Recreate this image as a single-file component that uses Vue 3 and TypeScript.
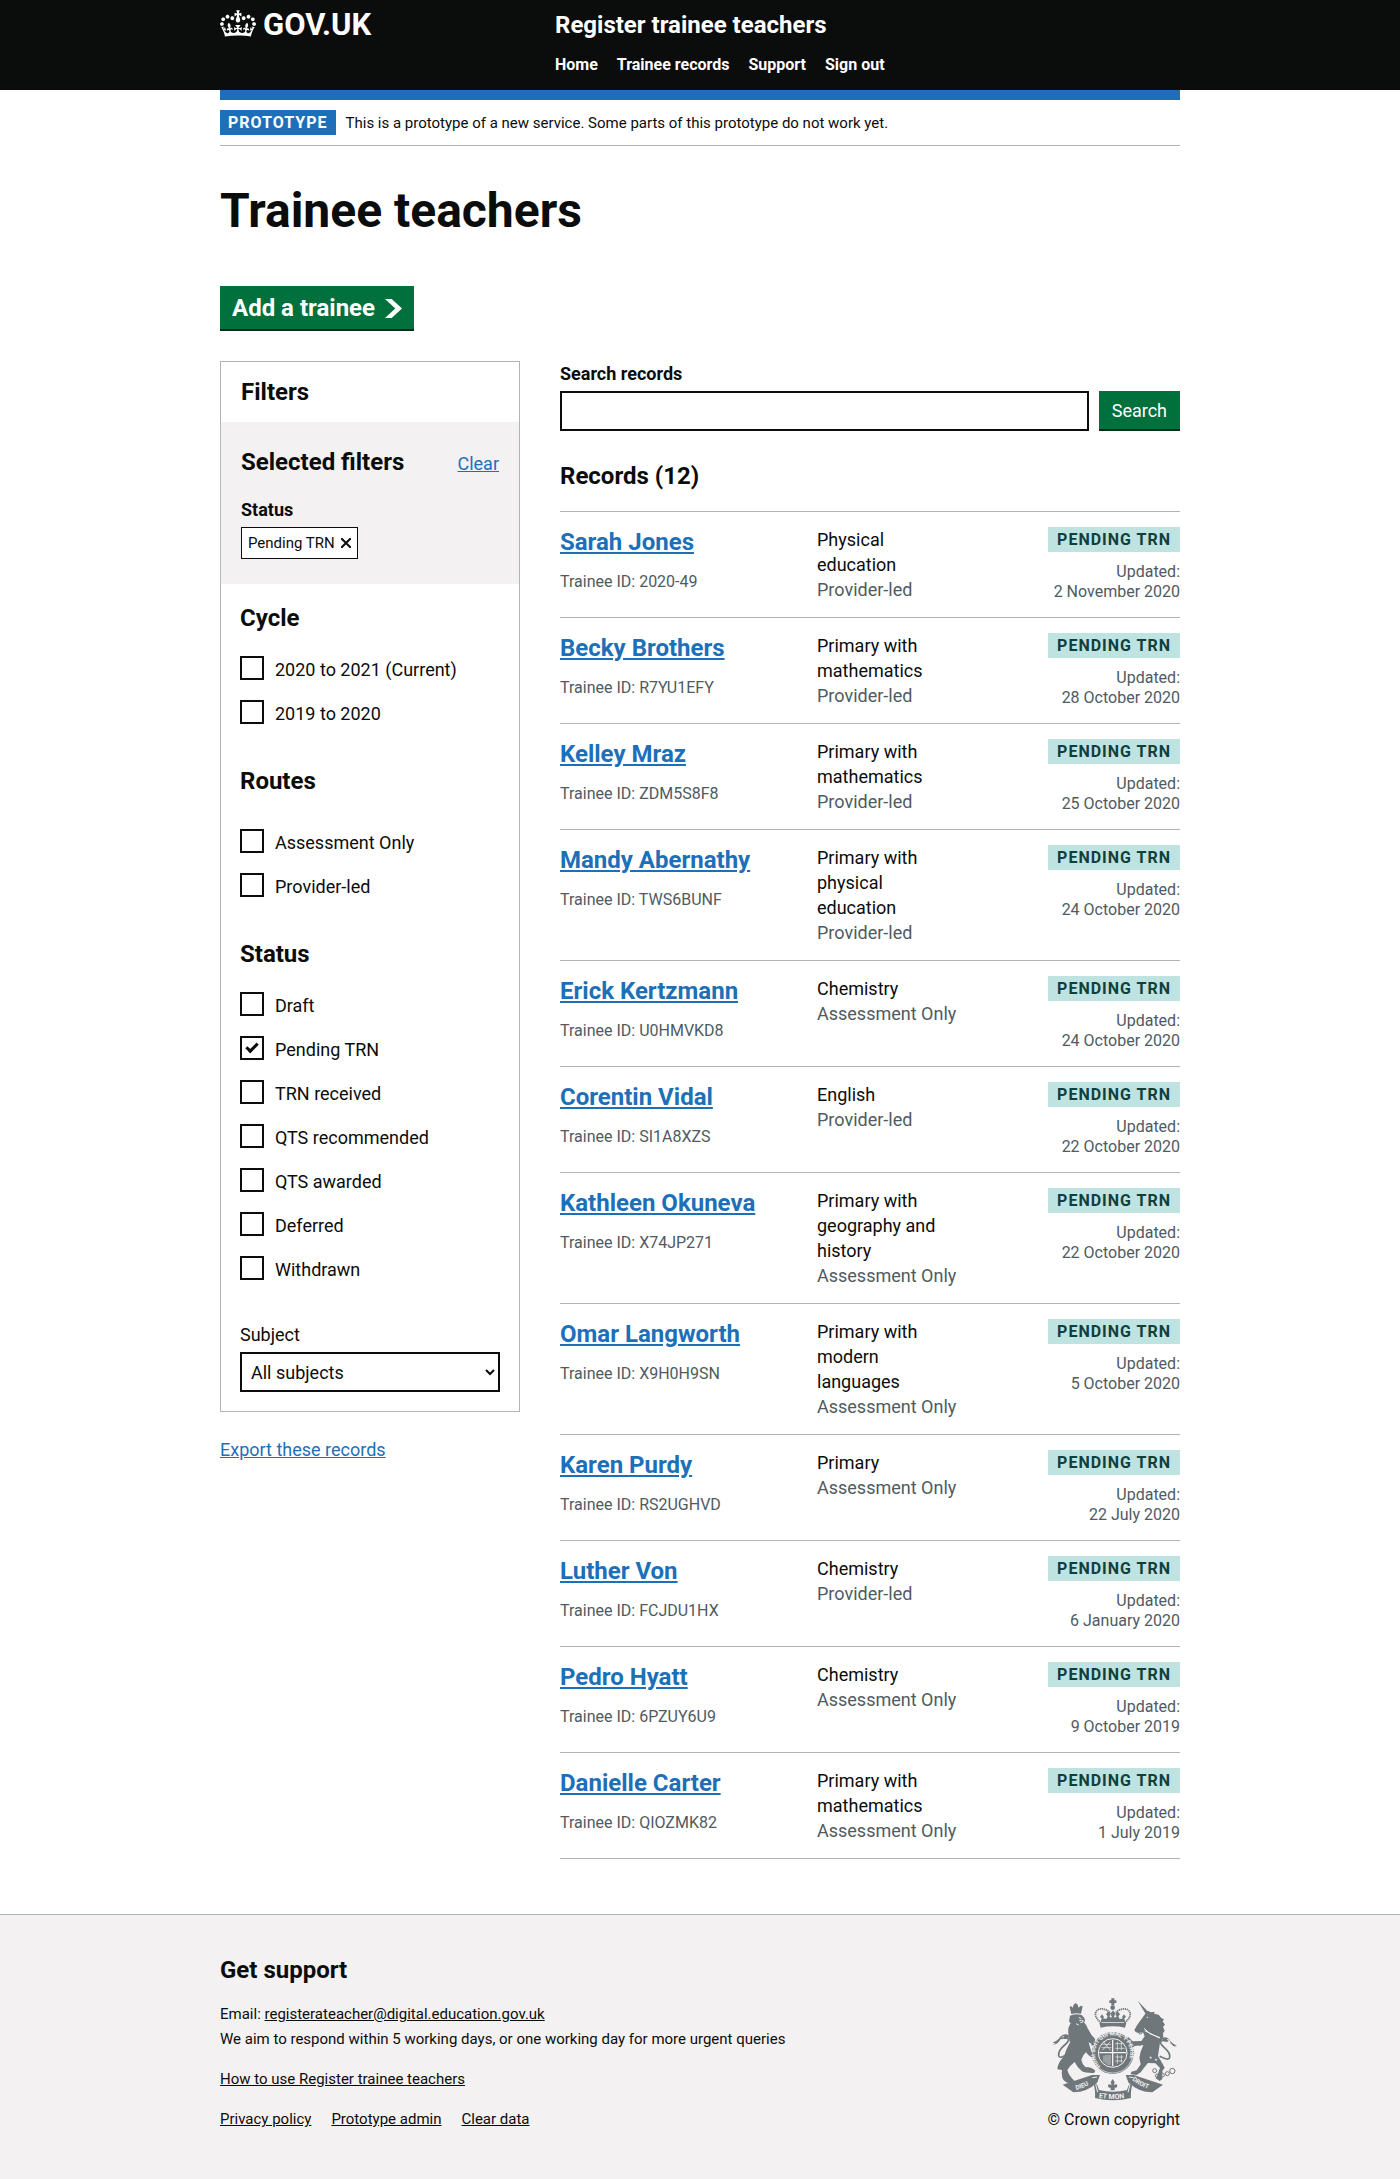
<script setup lang="ts">
import { ref } from 'vue'

interface Option {
  id: string
  label: string
}

interface FilterGroup {
  name: string
  spaced: boolean
  options: Option[]
}

interface TraineeRecord {
  name: string
  id: string
  subject: string
  route: string
  updated: string
}

const navigation: string[] = ['Home', 'Trainee records', 'Support', 'Sign out']
const footerLinks: string[] = ['Privacy policy', 'Prototype admin', 'Clear data']

const groups: FilterGroup[] = [
  {
    name: 'Cycle',
    spaced: false,
    options: [
      { id: 'cycle-2020', label: '2020 to 2021 (Current)' },
      { id: 'cycle-2019', label: '2019 to 2020' },
    ],
  },
  {
    name: 'Routes',
    spaced: true,
    options: [
      { id: 'route-assessment', label: 'Assessment Only' },
      { id: 'route-provider', label: 'Provider-led' },
    ],
  },
  {
    name: 'Status',
    spaced: false,
    options: [
      { id: 'status-draft', label: 'Draft' },
      { id: 'status-pending', label: 'Pending TRN' },
      { id: 'status-received', label: 'TRN received' },
      { id: 'status-recommended', label: 'QTS recommended' },
      { id: 'status-awarded', label: 'QTS awarded' },
      { id: 'status-deferred', label: 'Deferred' },
      { id: 'status-withdrawn', label: 'Withdrawn' },
    ],
  },
]

const selected = ref<string[]>(['status-pending'])
const subject = ref<string>('All subjects')
const query = ref<string>('')

const records: TraineeRecord[] = [
  { name: 'Sarah Jones', id: '2020-49', subject: 'Physical education', route: 'Provider-led', updated: '2 November 2020' },
  { name: 'Becky Brothers', id: 'R7YU1EFY', subject: 'Primary with mathematics', route: 'Provider-led', updated: '28 October 2020' },
  { name: 'Kelley Mraz', id: 'ZDM5S8F8', subject: 'Primary with mathematics', route: 'Provider-led', updated: '25 October 2020' },
  { name: 'Mandy Abernathy', id: 'TWS6BUNF', subject: 'Primary with physical education', route: 'Provider-led', updated: '24 October 2020' },
  { name: 'Erick Kertzmann', id: 'U0HMVKD8', subject: 'Chemistry', route: 'Assessment Only', updated: '24 October 2020' },
  { name: 'Corentin Vidal', id: 'SI1A8XZS', subject: 'English', route: 'Provider-led', updated: '22 October 2020' },
  { name: 'Kathleen Okuneva', id: 'X74JP271', subject: 'Primary with geography and history', route: 'Assessment Only', updated: '22 October 2020' },
  { name: 'Omar Langworth', id: 'X9H0H9SN', subject: 'Primary with modern languages', route: 'Assessment Only', updated: '5 October 2020' },
  { name: 'Karen Purdy', id: 'RS2UGHVD', subject: 'Primary', route: 'Assessment Only', updated: '22 July 2020' },
  { name: 'Luther Von', id: 'FCJDU1HX', subject: 'Chemistry', route: 'Provider-led', updated: '6 January 2020' },
  { name: 'Pedro Hyatt', id: '6PZUY6U9', subject: 'Chemistry', route: 'Assessment Only', updated: '9 October 2019' },
  { name: 'Danielle Carter', id: 'QIOZMK82', subject: 'Primary with mathematics', route: 'Assessment Only', updated: '1 July 2019' },
]
</script>

<template>
  <div class="page">
    <header class="header">
      <div class="container header-row">
        <a class="logo" href="#">
          <svg class="crown" viewBox="0 0 132 97" width="36" height="27" aria-hidden="true">
            <path
              fill="currentColor"
              fill-rule="evenodd"
              d="M25 30.2c3.5 1.5 7.7-.2 9.1-3.7 1.5-3.6-.2-7.8-3.9-9.2-3.6-1.4-7.6.3-9.1 3.9-1.4 3.5.3 7.5 3.9 9zM9 39.5c3.6 1.5 7.8-.2 9.2-3.7 1.5-3.6-.2-7.8-3.9-9.1-3.6-1.5-7.6.2-9.1 3.8-1.4 3.5.3 7.5 3.8 9zM4.4 57.2c3.5 1.5 7.7-.2 9.1-3.8 1.5-3.6-.2-7.7-3.9-9.1-3.5-1.5-7.6.3-9.1 3.8-1.4 3.5.3 7.6 3.9 9.1zm38.3-21.4c3.5 1.5 7.7-.2 9.1-3.8 1.5-3.6-.2-7.7-3.9-9.1-3.6-1.5-7.6.3-9.1 3.8-1.3 3.6.4 7.7 3.9 9.1zm64.4-5.6c-3.6 1.5-7.8-.2-9.1-3.7-1.5-3.6.2-7.8 3.8-9.2 3.6-1.4 7.7.3 9.2 3.9 1.3 3.5-.4 7.5-3.9 9zm15.9 9.3c-3.6 1.5-7.7-.2-9.1-3.7-1.5-3.6.2-7.8 3.7-9.1 3.6-1.5 7.7.2 9.2 3.8 1.5 3.5-.3 7.5-3.8 9zm4.7 17.7c-3.6 1.5-7.8-.2-9.2-3.8-1.5-3.6.2-7.7 3.9-9.1 3.6-1.5 7.7.3 9.2 3.8 1.3 3.5-.4 7.6-3.9 9.1zM89.3 35.8c-3.6 1.5-7.8-.2-9.2-3.8-1.4-3.6.2-7.7 3.9-9.1 3.6-1.5 7.7.3 9.2 3.8 1.4 3.6-.3 7.7-3.9 9.1zM69.7 17.7l8.9 4.7V9.3l-8.9 2.8c-.2-.3-.5-.6-.9-.9L72.4 0H59.6l3.5 11.2c-.3.3-.6.5-.9.9l-8.8-2.8v13.1l8.8-4.7c.3.3.6.7.9.9l-5 15.4v.1c-.2.8-.4 1.6-.4 2.4 0 4.1 3.1 7.5 7 8.1h.2c.3 0 .7.1 1 .1.4 0 .7 0 1-.1h.2c4-.6 7.1-4.1 7.1-8.1 0-.8-.1-1.7-.4-2.4V34l-5.1-15.4c.4-.2.7-.6 1-.9zM66 92.8c16.9 0 32.8 1.1 47.1 3.2 4-16.9 8.9-26.7 14-33.5l-9.6-3.4c1 4.9 1.1 7.2 0 10.2-1.5-1.4-3-4.3-4.2-8.7L108.6 76c2.8-2 5-3.2 7.5-3.3-4.4 9.4-10 11.9-13.6 11.2-4.3-.8-6.3-4.6-5.6-7.9 1-4.7 5.7-5.9 8-.5 4.3-8.7-3-11.4-7.6-8.8 7.1-7.2 7.9-13.5 2.1-21.1-8 6.1-8.1 12.3-4.5 20.8-4.7-5.4-12.1-2.5-9.5 6.2 3.4-5.2 7.9-2 7.2 3.1-.6 4.3-6.4 7.8-13.5 7.2-10.3-.9-10.9-8-11.2-13.8 2.5-.5 7.1 1.8 11 7.3L80.2 60c-4.1 4.4-8 5.3-12.3 5.4 1.4-4.4 8-11.6 8-11.6H55.5s6.4 7.2 7.9 11.6c-4.2-.1-8-1-12.3-5.4l1.4 16.4c3.9-5.5 8.5-7.7 10.9-7.3-.3 5.8-.9 12.8-11.1 13.8-7.2.6-12.9-2.9-13.5-7.2-.7-5 3.8-8.3 7.1-3.1 2.7-8.7-4.6-11.6-9.4-6.2 3.7-8.5 3.6-14.7-4.6-20.8-5.8 7.6-5 13.9 2.2 21.1-4.7-2.6-11.9.1-7.7 8.8 2.3-5.5 7.1-4.2 8.1.5.7 3.3-1.3 7.1-5.7 7.9-3.5.7-9-1.8-13.5-11.2 2.5.1 4.7 1.3 7.5 3.3l-4.7-15.4c-1.2 4.4-2.7 7.2-4.3 8.7-1.1-3-.9-5.3 0-10.2l-9.5 3.4c5 6.9 9.9 16.7 14 33.5 14.8-2.1 30.8-3.2 47.7-3.2z"
            />
          </svg>
          <span>GOV.UK</span>
        </a>
        <div class="service">
          <a class="service-name" href="#">Register trainee teachers</a>
          <nav class="nav" aria-label="Main">
            <a v-for="item in navigation" :key="item" href="#">{{ item }}</a>
          </nav>
        </div>
      </div>
    </header>

    <div class="container">
      <div class="phase">
        <strong class="tag tag-phase">Prototype</strong>
        <span>This is a prototype of a new service. Some parts of this prototype do not work yet.</span>
      </div>

      <main>
        <h1>Trainee teachers</h1>
        <button class="button start" type="button">
          Add a trainee
          <svg viewBox="0 0 33 40" width="17" height="19" preserveAspectRatio="none" aria-hidden="true">
            <path fill="currentColor" d="M0 0h13l20 20-20 20H0l20-20z" />
          </svg>
        </button>

        <div class="columns">
          <aside class="sidebar">
            <div class="filters">
              <h2 class="filters-title">Filters</h2>
              <div class="selected">
                <div class="selected-head">
                  <h2>Selected filters</h2>
                  <a class="link" href="#">Clear</a>
                </div>
                <h3>Status</h3>
                <a class="chip" href="#">
                  Pending TRN
                  <svg viewBox="0 0 10 10" width="10" height="10" aria-hidden="true">
                    <path d="M0 0l10 10M10 0L0 10" fill="none" stroke="currentColor" stroke-width="2" />
                  </svg>
                </a>
              </div>

              <form class="options" @submit.prevent>
                <fieldset v-for="group in groups" :key="group.name">
                  <legend :class="{ spaced: group.spaced }">{{ group.name }}</legend>
                  <div class="checks">
                    <label v-for="option in group.options" :key="option.id" class="check" :for="option.id">
                      <input :id="option.id" v-model="selected" type="checkbox" :value="option.id" />
                      <span>{{ option.label }}</span>
                    </label>
                  </div>
                </fieldset>
                <div class="field">
                  <label for="subject">Subject</label>
                  <select id="subject" v-model="subject">
                    <option>All subjects</option>
                  </select>
                </div>
              </form>
            </div>
            <a class="link export" href="#">Export these records</a>
          </aside>

          <section class="results">
            <form role="search" @submit.prevent>
              <label class="search-label" for="search">Search records</label>
              <div class="search-row">
                <input id="search" v-model="query" type="text" />
                <button class="button" type="submit">Search</button>
              </div>
            </form>

            <h2 class="count">Records (12)</h2>
            <ul class="records">
              <li v-for="record in records" :key="record.id" class="record">
                <div class="who">
                  <h3><a class="link" href="#">{{ record.name }}</a></h3>
                  <p>Trainee ID: {{ record.id }}</p>
                </div>
                <div class="what">
                  <p>{{ record.subject }}</p>
                  <p class="route">{{ record.route }}</p>
                </div>
                <div class="state">
                  <strong class="tag tag-status">Pending TRN</strong>
                  <p>Updated:<br />{{ record.updated }}</p>
                </div>
              </li>
            </ul>
          </section>
        </div>
      </main>
    </div>

    <footer class="footer">
      <div class="container footer-row">
        <div class="support">
          <h2>Get support</h2>
          <p>
            Email: <a href="#">registerateacher@digital.education.gov.uk</a><br />
            We aim to respond within 5 working days, or one working day for more urgent queries
          </p>
          <p><a href="#">How to use Register trainee teachers</a></p>
          <ul class="footer-links">
            <li v-for="item in footerLinks" :key="item"><a href="#">{{ item }}</a></li>
          </ul>
        </div>
        <a class="copyright" href="#">
          <svg class="crest" viewBox="60 50 390 315" width="130" height="105" aria-hidden="true">
            <defs>
              <path id="motto" d="M215 260A53 53 0 1 1 281 260" />
              <path id="ribbon-left" d="M139 329Q167 322 192 302" />
              <path id="ribbon-mid" d="M206 352Q248 360 292 352" />
              <path id="ribbon-right" d="M306 299Q333 322 370 330" />
            </defs>
            <g fill="#6f777b">
              <!-- crown above the shield -->
              <path d="M244 54h9v6h6v8h-6v7h-9v-7h-6v-8h6z" />
              <circle cx="248" cy="82" r="7" />
              <path d="M208 128h81l-4 14q-36-8-73 0z" />
              <path d="M212 126l3-12-5-4 6-8 6 8-3 4 10 2 4-8-5-6 7-9 7 9-4 6 6 6 3-8-5-6 7-10 7 10-5 6 3 8 6-6-4-6 7-9 7 9-5 6 4 8 10-2-3-4 6-8 6 8-5 4 3 12z" />
              <!-- lion -->
              <path d="M119 80l4-3 5 5 3-9 6-5 6 5 3 9 6-6 6 2-5 22q-15-3-29 1z" />
              <path d="M120 106q15-8 35-2l8 9q4 8-1 13 8 8 12 20l12 20q10 6 11 18l-5 16q-10-2-8-10l-8-4q4 22 14 36l-2 12q-14-8-20-18-10 8-14 22 2 14 12 22 22 0 30 12l-4 6q-24 1-36-5-16-14-22-28-16 12-22 24 4 16 22 34l-8 8q-22-4-28-16-4-14-2-26l-14-2q2-24 20-38 8-28 18-42-8-26-4-46l6-12-5-6z" />
              <path d="M66 194l10-4-8-4q16-4 22-16 12-14 28-4-4 12-18 10 6-5 0-9-8 3-9 11-8 14-25 16z" />
              <!-- unicorn -->
              <path d="M323 61l32 34-8 6z" />
              <path d="M346 100l8-9 8 5 12-2-2 6 14 3 8 10 8 4-4 6 7 10-6 6 5 12-5 8 1 12-10 16-3 20-3 20 12 20 8 15-7 10 0 24-8 6-12-8 5-9 8-22-14-14-22-1-10 12-12 16-12 8-18-2 2-8 16-4 12-18-4-20 4-18 8-20-26 3-10 8 10 14-6 8-18-16-2-20 8-14-10-8 10 2 12 12 26-1 10-14-5-12-14 2-8-3-4-6 8-14z" />
              <path d="M441 202l-8-5 8-2q-16-4-22-16-10-14-24-4 6 11 17 9-4-5 0-8 9 2 9 12 7 10 20 14z" />
              <!-- ribbons -->
              <path d="M98 313l88-29 24 0-8 22q-30 30-72 30z" />
              <path d="M399 313l-88-29-24 0 8 22q30 30 72 30z" />
              <path d="M187 303q10 20 8 50 54 14 108 0-2-30 8-50-14 2-20 26-42 10-84 0-6-24-20-26z" />
              <circle cx="248" cy="218" r="63" />
            </g>
            <g fill="none" stroke="#6f777b" stroke-width="5">
              <path d="M214 128c-40-30-4-60 28-30 3 3 4 8 4 14M283 128c40-30 4-60-28-30-3 3-4 8-4 14" stroke-dasharray="4 2" />
              <path d="M92 174c30-6 28 6 12 20s-20 24-18 32 14 6 26-6" />
              <path d="M415 182c-30-6-28 6-12 20s18 22 16 30-14 4-30-4" />
              <g stroke-width="3">
                <circle cx="374" cy="271" r="6" />
                <circle cx="381" cy="286" r="5" />
                <circle cx="397" cy="284" r="6" />
                <circle cx="412" cy="280" r="6" />
                <circle cx="427" cy="272" r="8" />
                <circle cx="331" cy="156" r="5" />
                <circle cx="329" cy="190" r="5" />
              </g>
            </g>
            <g fill="none" stroke="#f3f1f2" stroke-width="3">
              <circle cx="248" cy="218" r="60" stroke-width="2" />
              <circle cx="248" cy="218" r="43" />
              <path d="M208 217h80M248 178v80" stroke-width="4" />
              <path d="M217 192h26M214 202h30M220 184l22 26M241 184l-24 26M256 190h22M256 204h28M262 184v28M274 186v24M256 230h24M256 242h22M262 222v28M274 224v22" stroke-width="2" />
              <path d="M222 226v20M228 224v26M234 224v30M240 224v30" stroke-width="2" />
              <path d="M342 144l18 16 30 12M344 151l44 22" stroke-width="3" />
              <circle cx="352" cy="111" r="1" />
              <path d="M146 112l8 2M148 121q8-3 12 1-3 8-9 4M138 130l8 4" />
              <path d="M197 312l6 24M300 312l-6 24M187 292l14-2M311 292l-14-2" />
              <circle cx="362" cy="232" r="2" />
              <circle cx="378" cy="238" r="2" />
              <circle cx="392" cy="208" r="3" />
            </g>
            <path fill="#f3f1f2" d="M227 278a40 20 0 0 0 42 0l-6 10h-30z" />
            <path fill="#6f777b" d="M248 296l6 10-3 9q9-7 11 1 1 7-8 6v8h-12v-8q-9 1-8-6 2-8 11-1l-3-9z" />
            <g fill="#f3f1f2" font-weight="700">
              <text font-size="17"><textPath href="#motto" startOffset="4">HONI SOIT QUI MAL Y PENSE</textPath></text>
              <text font-size="19"><textPath href="#ribbon-left">DIEU</textPath></text>
              <text font-size="21"><textPath href="#ribbon-mid">ET MON</textPath></text>
              <text font-size="19"><textPath href="#ribbon-right">DROIT</textPath></text>
            </g>
          </svg>
          <span>© Crown copyright</span>
        </a>
      </div>
    </footer>
  </div>
</template>

<style>
body {
  margin: 0;
  background: #fff;
}
</style>

<style scoped>
.page {
  font-family: Roboto, "Liberation Sans", sans-serif;
  font-size: 18px;
  line-height: 25px;
  color: #0b0c0c;
}

.page *,
.page *::before {
  box-sizing: border-box;
}

h1,
h2,
h3,
p,
ul {
  margin: 0;
  padding: 0;
  list-style: none;
}

h2 {
  font-size: 24px;
  line-height: 30px;
}

h3 {
  font-size: 18px;
  line-height: 25px;
}

button,
input,
select {
  font: inherit;
  color: inherit;
  border-radius: 0;
}

.container {
  max-width: 960px;
  margin: 0 auto;
}

.link {
  color: #1d70b8;
}

.header {
  background: #0b0c0c;
  color: #fff;
}

.header-row {
  display: flex;
  padding: 10px 0 15px;
}

.header a {
  color: #fff;
  text-decoration: none;
}

.logo {
  display: flex;
  align-items: flex-start;
  gap: 7px;
  width: 335px;
  font-size: 31px;
  line-height: 30px;
  font-weight: 700;
}

.service-name {
  display: block;
  font-size: 24px;
  line-height: 30px;
  font-weight: 700;
}

.nav {
  display: flex;
  gap: 19px;
  margin-top: 15px;
  font-size: 16px;
  line-height: 20px;
  font-weight: 700;
}

.phase {
  display: flex;
  align-items: center;
  gap: 10px;
  padding: 10px 0;
  border-top: 10px solid #1d70b8;
  border-bottom: 1px solid #b1b4b6;
  font-size: 15px;
  line-height: 20px;
}

.tag {
  display: inline-block;
  padding: 5px 8px 4px;
  font-size: 16px;
  line-height: 16px;
  font-weight: 700;
  letter-spacing: 1px;
  text-transform: uppercase;
  white-space: nowrap;
}

.tag-phase {
  background: #1d70b8;
  color: #fff;
}

.tag-status {
  padding-right: 9px;
  padding-left: 9px;
  background: #bfe3e0;
  color: #10403c;
}

h1 {
  margin-top: 40px;
  font-size: 48px;
  line-height: 50px;
}

.button {
  border: 0;
  background: #00703c;
  color: #fff;
  box-shadow: 0 2px 0 #002d18;
}

.start {
  display: flex;
  align-items: center;
  gap: 10px;
  margin: 50px 0 32px;
  padding: 7px 12px 6px;
  font-size: 24px;
  line-height: 30px;
  font-weight: 700;
}

.columns {
  display: flex;
  align-items: flex-start;
  gap: 40px;
}

.sidebar {
  flex: none;
  width: 300px;
}

.filters {
  border: 1px solid #b1b4b6;
}

.filters-title {
  padding: 15px 20px;
}

.selected {
  padding: 25px 20px;
  background: #f3f1f2;
}

.selected-head {
  display: flex;
  justify-content: space-between;
  align-items: baseline;
  margin-bottom: 20px;
}

.chip {
  display: inline-flex;
  align-items: center;
  gap: 6px;
  height: 32px;
  margin-top: 5px;
  padding: 0 6px;
  border: 1px solid #0b0c0c;
  background: #fff;
  color: #0b0c0c;
  font-size: 15px;
  text-decoration: none;
  vertical-align: top;
}

.options {
  display: flex;
  flex-direction: column;
  gap: 38px;
  padding: 19px;
}

fieldset {
  min-width: 0;
  margin: 0;
  padding: 0;
  border: 0;
}

legend {
  padding: 0 0 23px;
  font-size: 24px;
  line-height: 30px;
  font-weight: 700;
}

legend.spaced {
  padding-bottom: 33px;
}

.checks {
  display: flex;
  flex-direction: column;
  gap: 16px;
}

.check {
  display: flex;
  gap: 11px;
  line-height: 28px;
}

.check input {
  display: grid;
  place-items: center;
  appearance: none;
  flex: none;
  width: 24px;
  height: 24px;
  margin: 0;
  border: 2px solid #0b0c0c;
  background: #fff;
}

.check input:checked::before {
  content: "";
  width: 12px;
  height: 7px;
  margin-bottom: 4px;
  border: solid #0b0c0c;
  border-width: 0 0 3px 3px;
  transform: rotate(-45deg);
}

.field {
  display: flex;
  flex-direction: column;
  gap: 5px;
}

select {
  width: 100%;
  height: 40px;
  padding: 5px;
  border: 2px solid #0b0c0c;
  background: #fff;
}

.export {
  display: inline-block;
  margin-top: 25px;
}

.results {
  flex: 1;
  min-width: 0;
}

.search-label {
  display: block;
  margin-bottom: 5px;
  font-weight: 700;
}

.search-row {
  display: flex;
  gap: 10px;
}

.search-row input {
  flex: 1;
  min-width: 0;
  height: 40px;
  padding: 5px;
  border: 2px solid #0b0c0c;
}

.search-row .button {
  height: 38px;
  padding: 0 13px;
}

.count {
  margin: 30px 0 20px;
}

.records {
  border-bottom: 1px solid #b1b4b6;
}

.record {
  display: flex;
  padding: 15px 0;
  border-top: 1px solid #b1b4b6;
}

.who {
  flex: 1;
}

.who h3 {
  margin-bottom: 15px;
  font-size: 24px;
  line-height: 30px;
}

.who p,
.state p {
  color: #505a5f;
  font-size: 16px;
  line-height: 20px;
}

.what {
  width: 144px;
}

.route {
  color: #505a5f;
}

.state {
  display: flex;
  flex-direction: column;
  align-items: flex-end;
  gap: 10px;
  width: 219px;
  text-align: right;
}

.footer {
  margin-top: 55px;
  padding: 40px 0 47px;
  border-top: 1px solid #b1b4b6;
  background: #f3f1f2;
  font-size: 15px;
}

.footer a {
  color: #0b0c0c;
}

.footer-row {
  display: flex;
  justify-content: space-between;
  align-items: flex-end;
}

.support {
  display: flex;
  flex-direction: column;
  gap: 15px;
}

.support h2 {
  margin-bottom: 2px;
}

.footer-links {
  display: flex;
  gap: 20px;
}

.footer .copyright {
  display: flex;
  flex-direction: column;
  align-items: flex-end;
  gap: 5px;
  font-size: 16px;
  text-decoration: none;
}
</style>
